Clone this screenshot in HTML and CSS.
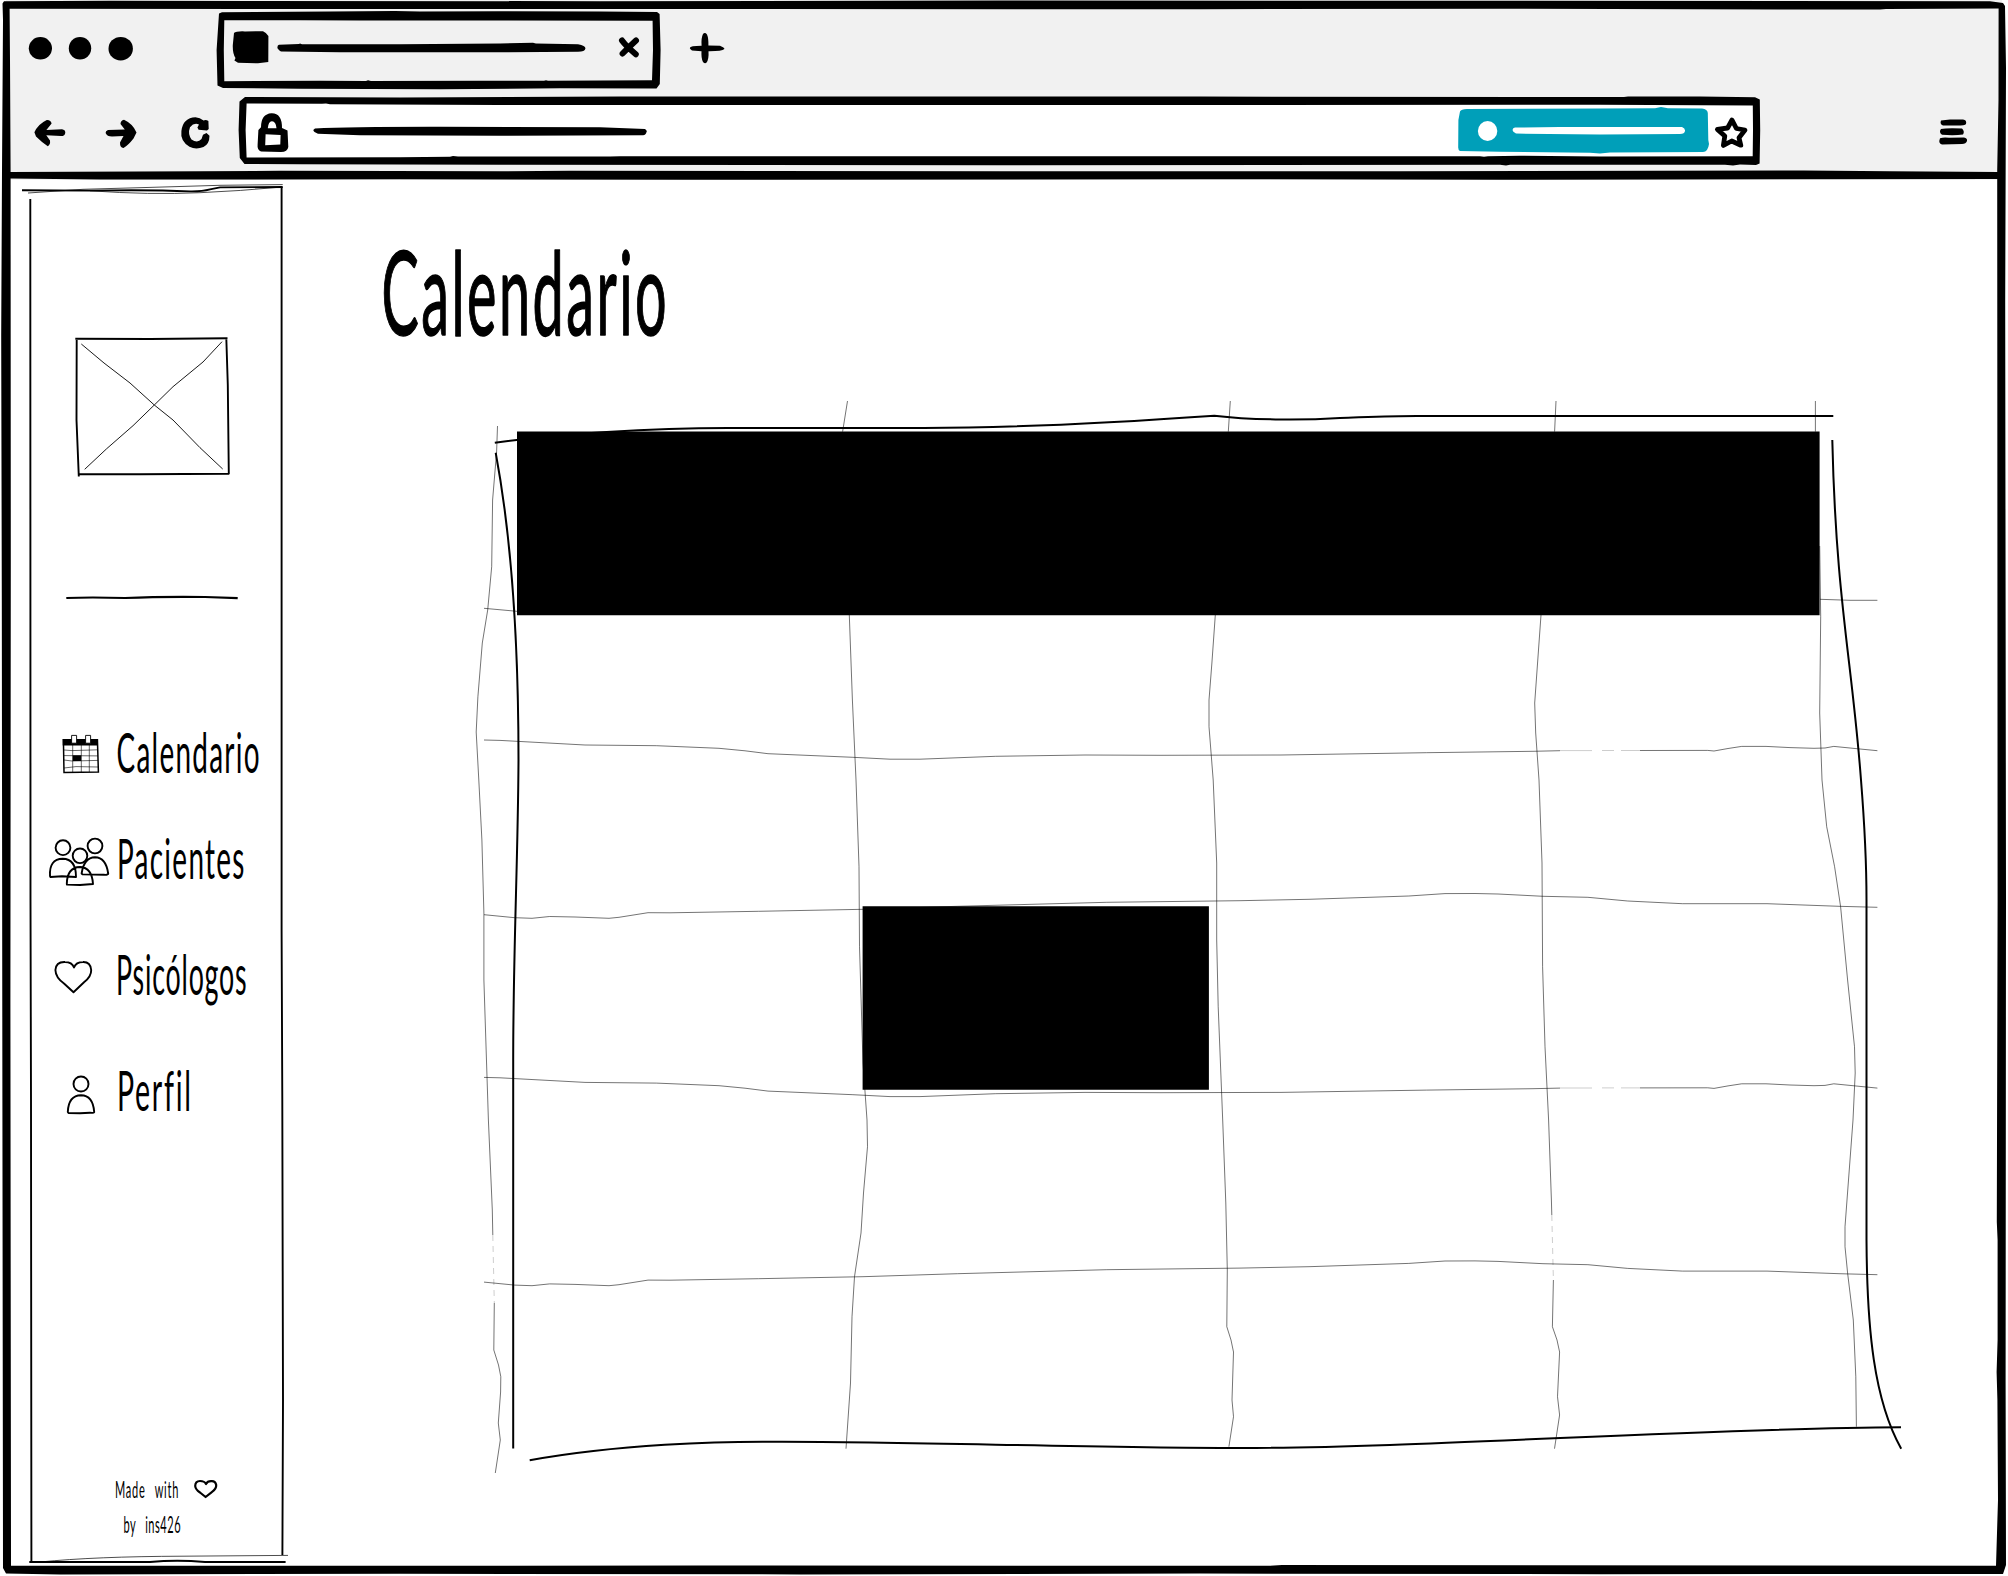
FILE: index.html
```html
<!DOCTYPE html>
<html lang="es">
<head>
<meta charset="utf-8">
<title>Calendario</title>
<link rel="stylesheet" href="styles.css">
</head>
<body>
<div class="window">
  <header class="chrome">
    <div class="tabs">
      <svg class="dots" width="112" height="92" viewBox="24 0 112 92">
        <ellipse cx="40.4" cy="48.3" rx="11.6" ry="11.2"/><ellipse cx="80" cy="48.2" rx="11.2" ry="11.3"/><ellipse cx="120.7" cy="48.7" rx="12.2" ry="11.8"/>
      </svg>
      <svg class="tab" width="450" height="92" viewBox="214 0 450 92">
        <path fill-rule="evenodd" d="M219 13.5L222 12.3L330 11.6L395 11L420 11.6L500 11.2L600 11.6L657 12L659.6 14L660.6 50L659.8 84L656.5 88.6L560 88.3L440 89.2L300 88.7L223 88L217.5 85.5L216.6 50ZM224.3 20.3L223.8 50L224.3 81.2L320 80.8L366 81L368 80.2L371 81L480 80.8L544 80.8L546 80.2L548 80.7L652 80.2L653 50L652.6 20.8L440 20.4L360 20.6L300 20.2Z"/>
        <path d="M234 33Q236 31 245 31.4L263 31.2Q267 33 268.4 36L268.3 62L258 63.3L238 62.8L234.4 60.5L235.5 58Q232.5 54 232.8 45Z"/>
        <path d="M279 44.8L299 44L300 43.6L302 44.3L400 44.2L500 43.5L533 42.7L536 43.5L578 44.2Q586 46 585.4 48.5Q585 51.8 578 51.8L480 52.3L340 52.2L281 51.4Q277.2 49 277.4 47.2Q277.5 45 279 44.8Z"/>
        <path class="x" d="M622 40.5Q626 46 635.8 54.2M636 40.500Q630 46 622.6 53.500"/>
      </svg>
      <svg class="plus" width="42" height="92" viewBox="684 0 42 92">
        <path d="M701 34Q703 31.8 705 34.5Q706.6 38 706.4 45.6L718 45.8Q722.6 47.8 722.4 49Q720 51.3 706.5 51.2Q707 59 704.6 62.5Q703 64.3 701 62Q699 58 699.5 51.2L690 50.4Q687.6 49 687.8 48Q688 45.7 699.6 45.7Q699 38 701 34Z"/>
      </svg>
    </div>
    <div class="toolbar">
      <svg class="back" width="40" height="88" viewBox="30 92 40 88">
        <path d="M34.4 132.3Q38 124 46.8 119.9Q50.8 119.6 51.6 123.6L46.4 129.9L62 129.3Q65.3 129.8 65.3 132.7Q65 136 61 136.1L46.3 135.2L50 140.6Q50.5 145 47.8 146.2Q42 142.5 36 136.5Z"/>
      </svg>
      <svg class="forward" width="40" height="88" viewBox="102 92 40 88">
        <path d="M136.5 132.5Q133 124 124 119.8Q120.5 120.6 120.5 124L124.8 129.6L108 130Q105.4 131 105.6 133Q107 136.5 112 136.6L123.5 136L120 142.4Q119.8 147.4 123.5 148Q128 145.5 133.5 138.5Z"/>
      </svg>
      <svg class="reload" width="38" height="88" viewBox="176 92 38 88">
        <path d="M181.4 131Q183 117.8 195.5 117.3Q200 117.5 203.5 120.5Q206 119.5 208.4 121L208.7 129L207 130.6L198.6 129.7L197.4 127.5L199 124.5Q194 122.3 190 127.3Q187.5 134 191.5 139.4Q197.5 143.6 201.5 139L203 134.8L206.5 133L209.5 135.8Q209.5 144 203.5 147Q196 150 189.5 146.8Q180 141 181.4 131Z"/>
      </svg>
      <svg class="address" width="1526" height="88" viewBox="236 92 1526 88">
        <path class="paper" d="M243 101H1756V161H243Z"/>
        <path fill-rule="evenodd" d="M239.500 101.500L245 97L400 97.400L620 96.600L1200 96.600L1624 97L1628 96.500L1700 96.500L1755 97.200L1759.800 99.500L1760.200 130L1759.600 163.500L1756 165L1740 164.600L1733 165.400L1725 164.800L1510 164.800L1506 165.600L1500 164.800L1000 165.200L500 164.800L300 164.200L244.500 164L239.800 158L238.600 130ZM246.600 103.600L245.600 130L246.600 157.400L400 157.200L450 156.800L453 156L458 156.600L610 156.600L620 156.200L1480 156.300L1484 156.800L1488 156.300L1520 155.700L1600 156.400L1752.700 156.200L1753 130L1752.800 105.600L1600 104.800L1200 105L500 105L330 104.200L326 103.600L322 103.800Z"/>
        <path fill-rule="evenodd" d="M258.4 130L261 127.3Q261 114 271.5 113.3Q282 113 282 128L287.5 130.5L288.3 147Q287.5 152 281 152L261 151.4Q257 150 257.6 145ZM265.6 134.3L265.2 145.3L280.3 144.4L280.6 135ZM267.8 128.2H276.5Q276 121.5 272 121.2Q268.5 121 267.8 128.2Z"/>
        <path d="M315 128.4Q350 126.6 440 126.7L600 127.3L645 128.9Q647.5 130.5 646.5 132Q646 135 643 135.2L500 135.8L360 135.3L318 133.8Q312.6 131.5 313.5 129.8Z"/>
        <path class="teal" d="M1460 111.5Q1461 109.3 1467 109L1600 108.4L1655 108.2L1661 107L1668 108.2L1702 108.6Q1707.5 109.3 1707.8 113L1708.3 140L1709 144Q1708 151.8 1703 152L1610 152.6L1600 153.4L1590 152.8L1500 151.8L1460 151Q1458 150 1458.2 147L1458.4 120Z"/>
        <ellipse class="paper" cx="1487.6" cy="131" rx="9.7" ry="10"/>
        <path class="paper" d="M1515 127.6L1560 127.1L1682 127Q1685.4 128.6 1685 131Q1684.6 133.8 1680 134L1600 134.4L1516 133.6Q1512.4 132 1512.5 130Q1512.8 128 1515 127.6Z"/>
        <path class="star" d="M1732 120L1736.4 128.5L1745 130L1739 137.8L1740.8 145.2L1731.7 141L1723.4 145.4L1724.8 136L1717.4 129.4L1727.6 128Z"/>
      </svg>
      <svg class="menu" width="38" height="88" viewBox="1934 92 38 88">
        <path d="M1941 120.5L1950 119.6L1963 119.4Q1967 119.8 1966 124Q1965 125.8 1955 125.6L1943 125.6Q1939.5 124 1941 120.5ZM1941 129Q1947 127.8 1962 128.5Q1965 131.5 1963 134.5Q1955 135.6 1942 134.8Q1938.5 132 1941 129ZM1940 138.3Q1944 136.8 1949 137.8L1964 137.6Q1967.6 138.3 1967 141Q1966 144 1962 144L1942 144.4Q1938 143.5 1940 138.3Z"/>
      </svg>
    </div>
  </header>

  <div class="workspace">
    <aside class="sidebar">
      <svg class="sidebar-frame" width="290" height="1396" viewBox="0 180 290 1396">
        <path class="edge" d="M22 190.3L90 190.6Q150 189.5 190 191.4Q202 191.6 210 189.4L220 187.4L282.7 187"/>
        <path class="hair" d="M28 193L83 189.3L150 187.4L220 185.3L282.7 184.6M90 190.8Q150 195 200 192.7Q240 191 282 187"/>
        <path class="edge" d="M30.3 199L30.5 900L31 1100L31.4 1562M281.6 187L281.6 930L282.3 1100L283 1400L282.4 1555"/>
        <path class="edge" d="M29.3 1562H150Q177 1559.5 205 1562H285.6"/>
        <path class="hair" d="M40 1562Q95 1556.5 183 1556.2L288 1555.4"/>
      </svg>
      <svg class="picture" width="190" height="170" viewBox="60 320 190 170">
        <path class="edge" d="M75.3 338.7L150 339L227.5 338.2M76.7 338L76.5 420L78.8 476.5M226.3 338L227.8 385L228.8 474M78.3 474L140 474.3L229.3 473.8"/>
        <path class="hair dark" d="M81.3 344L104 363L130 383L154.3 405L173 420L200 447.7L222.7 469M222 341.7L203 362L173 386.7L154.3 405L133 425.7L106.7 448.7L84.7 469.3"/>
      </svg>
      <svg class="rule" width="190" height="16" viewBox="60 590 190 16">
        <path d="M66.3 598Q90 597 125 598Q160 596.5 205 597L237.7 598.2"/>
      </svg>
      <nav class="nav">
        <a class="item"><svg width="70" height="106" viewBox="44 720 70 106">
          <path class="ink" d="M62.7 739H97.5V745.4H62.7Z"/>
          <path class="line15" d="M63.4 739L64 772.6L98.4 772L97.4 739"/>
          <path class="grid" d="M72.7 745V772M81.3 745V772M89.3 745V772M64 750L72 750.6L98 749.8M64 755.6L98 755.9M64 760L72 761L98 760.4M64 768L76 766.6L98 767"/>
          <path class="ink" d="M72.7 755.3H81.2V761H72.7Z"/>
          <path class="ring" d="M71.6 735.4H76.6V743.2H71.6ZM85.6 735.4H90.6V743.2H85.6Z"/>
        </svg><svg class="label" width="170" height="106" viewBox="114 720 170 106"><text transform="translate(116.500 772.500) scale(.49 1)" textLength="292">Calendario</text></svg></a>
        <a class="item"><svg width="70" height="116" viewBox="44 826 70 116">
          <g class="line18"><circle cx="63" cy="847.7" r="7.4"/><circle cx="95" cy="846" r="7.4"/><circle cx="80" cy="855.8" r="7.3"/>
          <path d="M50 876Q49 859 62.7 858.8Q76 859 76 877L62 876.3L50.5 877ZM81.6 873.5Q84 857.4 95 857.2Q106 857.5 108.2 873.5Q108 875 104 874.8L82.5 874.4ZM66.8 884Q67 867.4 80 867Q92 867.4 93 884L80 885L67 884.6Z"/></g>
        </svg><svg class="label" width="170" height="116" viewBox="114 826 170 116"><text transform="translate(117 878.500) scale(.49 1)" textLength="260">Pacientes</text></svg></a>
        <a class="item"><svg width="70" height="116" viewBox="44 942 70 116">
          <path class="line18" d="M74 967.5Q72 962 65 962Q56 961.6 55.4 970Q55.6 977.5 64 983.5L73.5 992.3L84 982.3Q91.4 976.5 91.2 970Q90.5 961.8 83 962Q76 962 74 967.5Z"/>
        </svg><svg class="label" width="170" height="116" viewBox="114 942 170 116"><text transform="translate(116 994.500) scale(.47 1)" textLength="278">Psicólogos</text></svg></a>
        <a class="item"><svg width="70" height="92" viewBox="44 1058 70 92">
          <g class="line18"><circle cx="81" cy="1084" r="7.5"/><path d="M67.8 1112Q68.500 1095.600 81 1095.300Q93 1095.600 94.200 1112Q94 1113 90 1112.800L80 1113.200L68.500 1113Z"/></g>
        </svg><svg class="label" width="170" height="92" viewBox="114 1058 170 92"><text transform="translate(117 1110.500) scale(.5 1)" textLength="148">Perfil</text></svg></a>
      </nav>
      <footer class="credit">
        <div class="credit-row">
          <svg class="small" width="70" height="36" viewBox="112 1470 70 36"><text transform="translate(115 1497.500) scale(.48 1)" textLength="132" word-spacing="12">Made with</text></svg>
          <svg class="heart" width="32" height="36" viewBox="190 1470 32 36"><path d="M206 1484Q204.500 1481 200 1481Q195.300 1481 195.200 1486Q195.500 1489.500 200 1492.500L205.600 1497L211.500 1492.300Q216.500 1489 216.200 1485Q215.500 1481 211.500 1481.200Q207.500 1481 206 1484Z"/></svg>
        </div>
        <div class="credit-row second">
          <svg class="small" width="66" height="40" viewBox="120 1506 66 40"><text transform="translate(123.500 1532.500) scale(.48 1)" textLength="119" word-spacing="12">by ins426</text></svg>
        </div>
      </footer>
    </aside>

    <main class="main">
      <h1 class="title"><svg width="310" height="130" viewBox="375 230 310 130"><text transform="translate(381.500 334.500) scale(.48 1)" textLength="594">Calendario</text></svg></h1>
      <svg class="calendar" width="1460" height="1090" viewBox="460 390 1460 1090">
        <defs>
          <path id="row-a" d="M484 740L500 740.400L585 745L656.400 745.700L719 748.300L745 750.800L768 753.700L852.900 757.300L890 759.200L920 759.200L995.700 756.300L1085 755L1160 755.300L1281 755L1426.600 752.700L1533 751.300L1560 750.700M1640 750.500L1707.700 750.400L1714 751L1728 748.500L1741.700 746.400L1766 746.400L1790 747.600L1814 748.300L1825 748L1833.800 746.400L1860 749L1877.400 750.700"/>
          <path id="row-a-gap" d="M1560 750.600H1592M1602 750.500H1614M1621 750.500H1640"/>
          <path id="row-b" d="M484 914.700L514.700 917.700L532 918.300L549.600 916.500L575 917L609 918.300L619 917.300L648 912.700L670 912.800L758.500 911.300L863 909.300L957.500 906.300L1106.800 902.300L1240 900.700L1309 899.300L1408.800 896L1445 893.600L1475 893.500L1498 894L1543 896.300L1587.900 897.300L1627.700 901L1682.400 903.700L1767 903.700L1839 906.300L1877.400 907.300"/>
        </defs>
        <g class="cells">
          <path d="M497.500 426L496.600 452L492.600 500L491.700 566.700L487.700 610L482.300 643L477.900 696.700L476.200 732L478.800 780L481.900 840L483.900 913V980L488.400 1120L492.300 1210L492.800 1235M494.300 1303L493.800 1350L498.500 1365L500.800 1376.700L500.600 1392L498.300 1423L500.300 1440L495.300 1473"/>
          <path d="M847.500 401L842.600 431.700M849.300 615L852.400 700L856 780L859 866.700L859.500 946.700L863 1063L867 1120L867.500 1146.700L863.500 1193L861 1233L854.500 1276.700L852 1316.700L850.500 1383L846 1448.700"/>
          <path d="M1230.300 401L1228.300 431.700M1215.300 615L1211.900 663L1209 700V726.700L1213.200 780L1216.700 863V940L1218.200 1006.700L1222.700 1120L1225.800 1203L1227.300 1270L1226.800 1326.700L1231 1340L1233.500 1352L1232 1400L1233.500 1416.700L1228.900 1446.700"/>
          <path d="M1556 401L1554.600 431.700M1541 615L1534.700 703L1535.700 733L1539 780L1542 863L1542.600 966.700L1545 1046.700L1548.600 1120L1551.400 1200L1551.800 1215M1553.400 1280L1552.400 1326.700L1557 1340L1559.600 1352L1557.500 1396.700L1559.600 1415L1554.500 1448.700"/>
          <path d="M1815.400 401V431.700M1819.700 546L1820.700 616.700L1819.700 713L1822 780L1826.700 826.700L1834.600 866.700L1840.600 906.700L1847.600 980L1854.500 1046.700L1855.200 1073L1853 1120L1845 1226.700V1246.700L1847.600 1273L1853.300 1320L1855.800 1376.700L1856.400 1426.700"/>
          <path d="M484 608.300L517 611.300M1820 599.300L1850 600.300H1877.400"/>
          <use href="#row-a"/><use href="#row-a" y="337.400"/>
          <use href="#row-b"/><use href="#row-b" y="367.400"/>
        </g>
        <g class="faint">
          <path class="dotted" d="M492.800 1235L494.300 1303M1551.800 1215L1553.400 1280"/>
          <use href="#row-a-gap"/><use href="#row-a-gap" y="337.400"/>
        </g>
        <g class="bold">
          <path d="M494.800 442.700C560 434 650 428 728 428H924C1020 428 1110 423 1214.300 415.700C1250 420 1300 420.500 1340 418C1370 417 1390 416 1417 416H1833.300"/>
          <path d="M495.700 452.700C512 540 518.500 650 518.500 760C518 860 513.200 950 513.200 1060V1448.500"/>
          <path d="M1832.300 440C1836 600 1852 660 1861 780C1865 830 1866.500 870 1866.500 900V1240C1867 1330 1874 1400 1901.200 1448.700"/>
          <path d="M529.700 1460.300C620 1444 720 1441.500 768.500 1441.700C900 1441 1080 1448 1240 1448C1420 1448 1700 1428 1901 1427.300"/>
        </g>
        <path class="ink" d="M517 431.400H1819.600V615.200H517ZM862.600 906.300H1208.900V1089.800H862.600Z"/>
      </svg>
    </main>
  </div>

  <svg class="frame" width="2008" height="1576" viewBox="0 0 2008 1576">
    <path fill-rule="evenodd" d="M2.500 3.500L4 1.300L110 .8L600 1.200L1000 .6L1500 .8L1990 1.200L2003 3L2005 6L2006 68L2005.200 300L2006 900L2005.600 1380L2006 1565L2003 1574L1600 1574.200L1200 1573.600L800 1574.400L400 1573.800L60 1574.400L6 1573.400L3 1568L2.400 1100L1.800 600L1.200 335L2 170L3 20ZM9.600 8.800L10 60L10.600 171.500L10.800 560L10.400 1000L11 1565.700L700 1565.600L1270 1565.800L1282 1565L1996 1565.700L1998 1500L1997.400 1400L1996.600 1372L1997.600 1340L1997.600 1240L1996.800 1222L1997.600 900L1997.200 171L1998.500 100L1998.600 8.600L1886 9L1880 9.600L1500 8.800L1200 9.200L280 8.900Z"/>
    <path d="M10 172L200 171.300L280 170.800L500 171.300L570 170.800L1000 171.300L1400 171.300L1804 170.500L1890 171.200L1998 172V179L1500 179.700L1200 179.200L685 179.800L400 179.300L100 179.600L10 178.500Z"/>
  </svg>
</div>
</body>
</html>
```
FILE: styles.css
```css
* {
  box-sizing: border-box;
}

body {
  margin: 0;
  background: #fff;
  color: #000;
  font-family: Lato, "Liberation Sans", sans-serif;
}

svg {
  display: block;
  flex: none;
}

.window {
  position: relative;
  display: flex;
  flex-direction: column;
  width: 2008px;
  height: 1576px;
  overflow: hidden;
}

/* Heavy outline drawn over the whole window */
.frame {
  position: absolute;
  inset: 0;
  pointer-events: none;
}

/* Browser bar */
.chrome {
  height: 180px;
  margin: 0 6px;
  padding-left: 18px;
  background: #f1f1f1;
}

.tabs,
.toolbar {
  display: flex;
}

.toolbar {
  height: 88px;
}

.tab {
  margin-left: 78px;
}

.tab .x {
  fill: none;
  stroke: #000;
  stroke-width: 6;
  stroke-linecap: round;
}

.plus {
  margin-left: 22px;
}

.back {
  margin-left: 6px;
}

.forward {
  margin-left: 32px;
}

.reload {
  margin-left: 34px;
}

.address {
  margin-left: 22px;
}

.menu {
  margin-left: 172px;
}

.paper {
  fill: #fff;
}

.teal {
  fill: #009fb9;
}

.star {
  fill: none;
  stroke: #000;
  stroke-width: 4.8;
  stroke-linejoin: round;
}

/* Page body */
.workspace {
  display: flex;
  flex: 1;
}

.sidebar {
  position: relative;
  flex: none;
  width: 290px;
  padding-top: 140px;
}

.sidebar-frame {
  position: absolute;
  inset: 0;
}

.edge {
  fill: none;
  stroke: #000;
  stroke-width: 1.9;
}

.hair {
  fill: none;
  stroke: #000;
  stroke-width: 0.7;
}

.hair.dark {
  stroke-width: 0.9;
}

.ink {
  fill: #000;
}

.picture {
  margin-left: 60px;
}

.rule {
  margin: 100px 0 0 60px;
  fill: none;
  stroke: #000;
  stroke-width: 2.2;
}

.nav {
  display: flex;
  flex-direction: column;
  margin: 114px 0 0 44px;
}

.item {
  display: flex;
}

.line15,
.line18 {
  fill: none;
  stroke: #000;
  stroke-width: 1.5;
}

.line18 {
  stroke-width: 1.9;
  stroke-linejoin: round;
}

.grid {
  fill: none;
  stroke: #000;
  stroke-width: 0.6;
}

.ring {
  fill: #fff;
  stroke: #000;
  stroke-width: 0.9;
}

.label,
.small {
  overflow: visible;
}

.label text {
  font-size: 57px;
  font-variant-ligatures: none;
}

.credit {
  margin: 320px 0 0 112px;
}

.credit-row {
  display: flex;
  gap: 8px;
}

.credit-row.second {
  margin-left: 8px;
}

.small text {
  font-size: 23px;
}

.heart {
  fill: none;
  stroke: #000;
  stroke-width: 2.2;
  stroke-linejoin: round;
}

.main {
  flex: 1;
  min-width: 0;
  padding-top: 50px;
}

.title {
  margin: 0 0 0 85px;
  font-weight: 400;
}

.title svg {
  overflow: visible;
}

.title text {
  font-size: 116px;
  stroke: #000;
  stroke-width: 1.5;
  stroke-linejoin: round;
}

.calendar {
  margin: 30px 0 0 170px;
}

.cells {
  fill: none;
  stroke: #000;
  stroke-width: 0.55;
}

.faint {
  fill: none;
  stroke: #000;
  stroke-width: 0.2;
}

.dotted {
  stroke-dasharray: 6 5;
}

.bold {
  fill: none;
  stroke: #000;
  stroke-width: 2;
}
```
